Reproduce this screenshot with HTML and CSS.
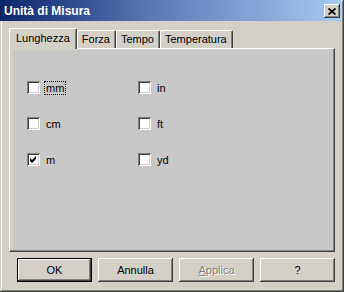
FILE: index.html
```html
<!DOCTYPE html>
<html lang="it">
<head>
    <meta charset="UTF-8">
    <title>Unità di Misura</title>
    <link rel="stylesheet" href="styles.css">
</head>
<body>
    <div class="window">
        <div class="titlebar">
            <span class="title">Unità di Misura</span>
            <button class="close">
                <svg width="8" height="7" viewBox="0 0 8 7"><path d="M0.5 0.5L7.5 6.5M7.5 0.5L0.5 6.5" stroke="#000" stroke-width="1.7"/></svg>
            </button>
        </div>
        <div class="tabs">
            <div class="tab active">Lunghezza</div>
            <div class="tab">Forza</div>
            <div class="tab">Tempo</div>
            <div class="tab">Temperatura</div>
        </div>
        <div class="panel">
            <div class="page">
                <div class="options">
                    <label class="opt"><span class="box"></span><span class="text focus">mm</span></label>
                    <label class="opt"><span class="box"></span><span class="text">in</span></label>
                    <label class="opt"><span class="box"></span><span class="text">cm</span></label>
                    <label class="opt"><span class="box"></span><span class="text">ft</span></label>
                    <label class="opt"><span class="box"><svg width="9" height="9" viewBox="0 0 9 9"><path d="M1 3L3 5L7 1L7 4L3 8L1 6Z" fill="#000"/></svg></span><span class="text">m</span></label>
                    <label class="opt"><span class="box"></span><span class="text">yd</span></label>
                </div>
            </div>
        </div>
        <div class="buttons">
            <button class="btn default">OK</button>
            <button class="btn">Annulla</button>
            <button class="btn disabled"><u>A</u>pplica</button>
            <button class="btn">?</button>
        </div>
    </div>
</body>
</html>
```
FILE: styles.css
```css
*{margin: 0;padding: 0;box-sizing: border-box}
body{
    font-family: "Liberation Sans", Arial, sans-serif;
    font-size: 11px;
    color: #000;
    background: #d4d0c8;
}
.window{
    width: 344px;
    height: 292px;
    padding: 0 3px 3px 0;
    background: #d4d0c8;
    box-shadow: inset -1px -1px #404040, inset 1px 1px #d4d0c8, inset -2px -2px #808080, inset 2px 2px #fff;
}
.titlebar{
    height: 21px;
    display: flex;
    align-items: center;
    justify-content: space-between;
    padding: 1px 1px 0 4px;
    background: linear-gradient(to right, #0a246a, #5a7ab8 45%, #a6caf0);
}
.title{
    color: #fff;
    font-weight: bold;
    font-size: 12px;
}
.close{
    width: 16px;
    height: 14px;
    border: none;
    background: #d4d0c8;
    display: flex;
    align-items: center;
    justify-content: center;
    box-shadow: inset -1px -1px #404040, inset 1px 1px #fff, inset -2px -2px #808080;
}
.close svg{
    display: block;
}
.tabs{
    display: flex;
    align-items: flex-end;
    margin: 7px 0 0 9px;
    height: 20px;
    position: relative;
    z-index: 1;
}
.tab{
    height: 18px;
    line-height: 17px;
    padding: 0 5px 0 4px;
    border-left: 1px solid #fff;
    border-top: 1px solid #fff;
    border-right: 1px solid #404040;
    border-radius: 2px 2px 0 0;
    box-shadow: inset -1px 0 #808080;
    background: #d4d0c8;
}
.tab.active{
    height: 21px;
    line-height: 18px;
    padding: 0 6px;
    margin-bottom: -1px;
}
.panel{
    width: 326px;
    height: 204px;
    margin-left: 9px;
    border-top: 1px solid #fff;
    border-left: 1px solid #fff;
    border-right: 1px solid #404040;
    border-bottom: 1px solid #404040;
    box-shadow: inset -1px -1px #808080;
    padding: 1px 1px 1px 3px;
}
.page{
    height: 100%;
    background: #c8c8c8;
    padding: 31px 0 0 14px;
}
.options{
    display: grid;
    grid-template-columns: 111px 111px;
    row-gap: 23px;
}
.opt{
    display: flex;
    align-items: center;
    height: 13px;
}
.box{
    width: 13px;
    height: 13px;
    padding: 2px;
    background: #fff;
    box-shadow: inset 1px 1px #808080, inset -1px -1px #fff, inset 2px 2px #404040, inset -2px -2px #d4d0c8;
}
.box svg{
    display: block;
}
.text{
    margin-left: 4px;
    padding: 0 1px;
    line-height: 12px;
    border: 1px dotted transparent;
}
.text.focus{
    border-color: #000;
}
.buttons{
    display: flex;
    gap: 6px;
    margin: 6px 0 0 17px;
}
.btn{
    width: 75px;
    height: 24px;
    border: none;
    background: #d4d0c8;
    font-family: inherit;
    font-size: 11px;
    color: #000;
    box-shadow: inset -1px -1px #404040, inset 1px 1px #fff, inset -2px -2px #808080;
}
.btn.default{
    border: 1px solid #000;
}
.btn.disabled{
    color: #808080;
    text-shadow: 1px 1px #fff;
}
```
